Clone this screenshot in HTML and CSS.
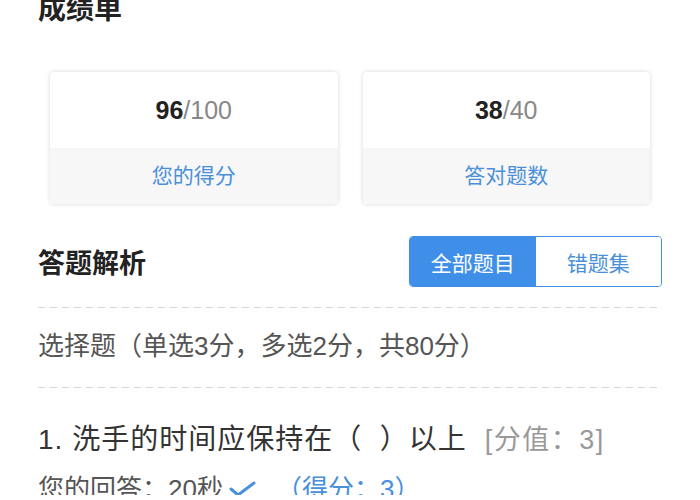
FILE: index.html
```html
<!DOCTYPE html>
<html lang="zh-CN">
<head>
<meta charset="utf-8">
<title>成绩单</title>
<link rel="stylesheet" href="styles.css">
</head>
<body>
<div class="page">
  <h1 class="title">成绩单</h1>
  <div class="cards">
    <div class="card">
      <div class="card-top"><span class="num"><b>96</b>/100</span></div>
      <div class="card-bottom">您的得分</div>
    </div>
    <div class="card">
      <div class="card-top"><span class="num"><b>38</b>/40</span></div>
      <div class="card-bottom">答对题数</div>
    </div>
  </div>
  <div class="section-head">
    <h2 class="section-title">答题解析</h2>
    <div class="tabs">
      <span class="tab tab-active">全部题目</span>
      <span class="tab">错题集</span>
    </div>
  </div>
  <div class="dash"></div>
  <div class="group-title">选择题（单选3分，多选2分，共80分）</div>
  <div class="dash"></div>
  <div class="question">1. 洗手的时间应保持在（&nbsp;&nbsp;）以上<span class="worth">[分值：3]</span></div>
  <div class="answer">
    <span>您的回答：20秒</span>
    <svg class="check" width="28" height="16" viewBox="0 0 28 16"><polyline points="2,8 9,14 25,2" fill="none" stroke="#4a90dc" stroke-width="3" stroke-linecap="round" stroke-linejoin="round"/></svg>
    <span class="got">（得分：3）</span>
  </div>
</div>
</body>
</html>
```
FILE: styles.css
```css
html, body {
  margin: 0;
  padding: 0;
  background: #ffffff;
  overflow: hidden;
}
body {
  font-family: "Liberation Sans", "Noto Sans CJK SC", sans-serif;
  color: #333333;
}
.page {
  padding: 0 38px;
  height: 500px;
}
.title {
  margin: -5px 0 0 0;
  height: 30px;
  line-height: 30px;
  font-size: 28px;
  font-weight: bold;
  color: #222222;
}
.cards {
  margin-top: 47px;
  padding: 0 12px;
  display: grid;
  grid-template-columns: 1fr 1fr;
  gap: 25px;
}
.card {
  border-radius: 4px;
  box-shadow: 0 0 4px rgba(0, 0, 0, 0.16);
  overflow: hidden;
  background: #ffffff;
}
.card-top {
  height: 76px;
  display: flex;
  align-items: center;
  justify-content: center;
}
.num {
  font-size: 25px;
  color: #888888;
}
.num b {
  color: #222222;
}
.card-bottom {
  height: 56px;
  box-sizing: border-box;
  padding-bottom: 4px;
  background: #f7f7f8;
  color: #4a8fd9;
  font-size: 21px;
  display: flex;
  align-items: center;
  justify-content: center;
}
.section-head {
  margin-top: 32px;
  height: 51px;
  display: flex;
  align-items: center;
  justify-content: space-between;
}
.section-title {
  margin: 0;
  font-size: 27px;
  font-weight: bold;
  color: #222222;
}
.tabs {
  display: flex;
  width: 253px;
  height: 51px;
  box-sizing: border-box;
  border: 1px solid #3f8fe8;
  border-radius: 4px;
  overflow: hidden;
}
.tab {
  flex: 1;
  display: flex;
  align-items: center;
  justify-content: center;
  font-size: 21px;
  color: #4a8fd9;
  background: #ffffff;
}
.tab-active {
  background: #3f8fe8;
  color: #ffffff;
}
.dash {
  height: 1px;
  background-image: linear-gradient(to right, #d6d6d6 55%, transparent 55%);
  background-size: 12px 1px;
  background-repeat: repeat-x;
}
.section-head + .dash {
  margin-top: 20px;
}
.group-title {
  height: 79px;
  box-sizing: border-box;
  padding-bottom: 8px;
  display: flex;
  align-items: center;
  font-size: 26px;
  color: #555555;
}
.question {
  margin-top: 34px;
  font-size: 28px;
  letter-spacing: 1px;
  line-height: 36px;
  color: #333333;
}
.worth {
  margin-left: 18px;
  color: #999999;
  font-size: 27px;
  letter-spacing: 1.5px;
}
.answer {
  margin-top: 15px;
  display: flex;
  align-items: center;
  font-size: 26px;
  line-height: 32px;
  color: #555555;
}
.check {
  margin: 0 8px 0 6px;
}
.got {
  margin-left: 11px;
  color: #4a8fd9;
}
```
